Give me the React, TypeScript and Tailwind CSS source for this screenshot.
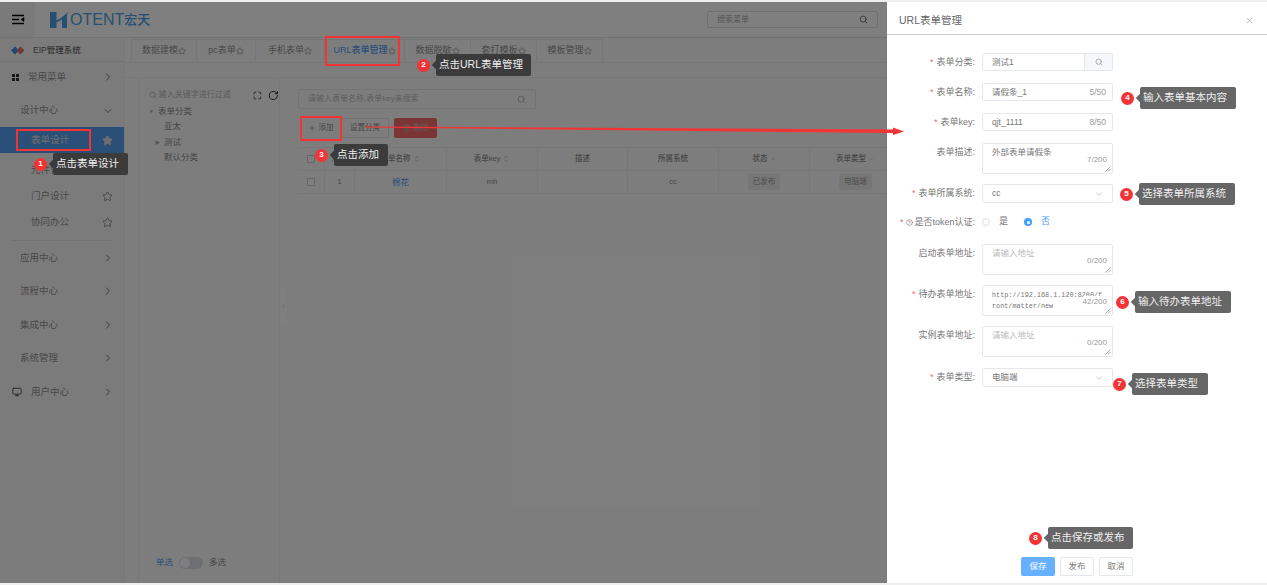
import { ChevronDown, ChevronRight, ChevronLeft, Search, Star, Plus, Trash2, Monitor, X, RotateCw, Maximize, ChevronsUpDown, CircleHelp } from 'lucide-react'

const tabs = [
  { name: '数据建模', w: 'w-[66px]' },
  { name: 'pc表单', w: 'w-[59px]' },
  { name: '手机表单', w: 'w-[69px]' },
  { name: 'URL表单管理', w: 'w-[80px]', active: true },
  { name: '数据脱敏', w: 'w-[66px]' },
  { name: '套打模板', w: 'w-[66px]' },
  { name: '模板管理', w: 'w-[66px]' },
]

const columns = [
  { name: '', w: 'w-[27px]' },
  { name: '序号', w: 'w-[30px]' },
  { name: '表单名称', w: 'w-[92px]', sort: true },
  { name: '表单key', w: 'w-[91px]', sort: true },
  { name: '描述', w: 'w-[90px]' },
  { name: '所属系统', w: 'w-[91px]' },
  { name: '状态', w: 'w-[91px]', filter: true },
  { name: '表单类型', w: 'w-[91px]', filter: true },
]

function MenuGroup({ name }: { name: string }) {
  return (
    <div className="flex h-[33.5px] items-center justify-between pl-[20px] pr-[10px] text-[9.5px] text-[#929292]">
      <span>{name}</span>
      <ChevronRight size={12} className="text-[#777]" />
    </div>
  )
}

function SubItem({ name, active, solid }: { name: string; active?: boolean; solid?: boolean }) {
  return (
    <div className={`flex h-[26px] items-center justify-between pl-[31px] pr-[11px] text-[9.5px] ${active ? 'bg-[#559ff0] text-[#ddd]' : 'text-[#929292]'}`}>
      <span>{name}</span>
      <Star size={11} className={solid ? 'fill-[#ddd] text-[#ddd]' : 'text-[#888]'} />
    </div>
  )
}

function Sidebar() {
  return (
    <aside className="flex w-[125px] shrink-0 flex-col border-r border-[#eee] bg-[#f7f7f7]">
      <div className="flex h-[24px] items-center gap-[8px] border-b border-[#e6e6e6] pl-[11px] pt-[2px] text-[8.5px] font-medium text-[#666]">
        <svg width="14" height="9" viewBox="0 0 14 9">
          <path d="M4 0.5 L8 4.5 L4 8.5 L0 4.5 Z" fill="#3f8fe8" />
          <path d="M9.5 0.5 L13.5 4.5 L9.5 8.5 L5.5 4.5 Z" fill="#e8706a" />
        </svg>
        <span>EIP管理系统</span>
      </div>
      <div className="flex h-[30px] items-center justify-between pl-[12px] pr-[10px] text-[9.5px] text-[#929292]">
        <span className="flex items-center gap-[9px]">
          <span className="grid grid-cols-2 gap-[1px]">
            <i className="size-[3px] bg-[#333]" />
            <i className="size-[3px] bg-[#333]" />
            <i className="size-[3px] bg-[#333]" />
            <i className="size-[3px] bg-[#333]" />
          </span>
          常用菜单
        </span>
        <ChevronRight size={12} className="text-[#777]" />
      </div>
      <div className="mt-[2px] flex h-[33px] items-center justify-between pl-[20px] pr-[10px] text-[9.5px] text-[#929292]">
        <span>设计中心</span>
        <ChevronDown size={12} className="text-[#777]" />
      </div>
      <SubItem name="表单设计" active solid />
      <div className="h-[4px]" />
      <SubItem name="元件管理" />
      <SubItem name="门户设计" />
      <SubItem name="协同办公" />
      <div className="mx-[12px] mt-[5px] border-t border-[#e4e4e4]" />
      <MenuGroup name="应用中心" />
      <MenuGroup name="流程中心" />
      <MenuGroup name="集成中心" />
      <MenuGroup name="系统管理" />
      <div className="flex h-[33.5px] items-center justify-between pl-[12px] pr-[10px] text-[9.5px] text-[#929292]">
        <span className="flex items-center gap-[9px]">
          <Monitor size={10} className="text-[#444]" />
          用户中心
        </span>
        <ChevronRight size={12} className="text-[#777]" />
      </div>
    </aside>
  )
}

function TreePanel() {
  return (
    <div className="relative flex w-[142px] shrink-0 flex-col border-x border-[#f0f0f0] pl-[10px] pt-[10px] text-[8.5px] text-[#8c8c8c]">
      <div className="flex h-[14px] items-center gap-[2px] text-[8px] text-[#b4b4b4]">
        <Search size={8} className="text-[#aaa]" />
        <span className="w-[84px] whitespace-nowrap">输入关键字进行过滤</span>
        <Maximize size={9} className="ml-[10px] text-[#222]" />
        <RotateCw size={11} className="ml-[4px] text-[#222]" />
      </div>
      <div className="mt-[2px] flex h-[15px] items-center gap-[4px]">
        <span className="text-[5px] text-[#aaa]">▼</span>表单分类
      </div>
      <div className="flex h-[15.5px] items-center pl-[15px]">亚太</div>
      <div className="flex h-[15.5px] items-center pl-[6px]">
        <span className="w-[9px] text-[5px] text-[#aaa]">▶</span>测试
      </div>
      <div className="flex h-[15.5px] items-center pl-[15px]">默认分类</div>
      <div className="absolute bottom-[14px] left-[17px] flex items-center gap-[6px] text-[8.5px]">
        <span className="text-[#559ff0]">单选</span>
        <span className="flex h-[12px] w-[24px] items-center rounded-full bg-[#dcdfe6] pl-[1px]">
          <i className="size-[10px] rounded-full bg-white" />
        </span>
        <span>多选</span>
      </div>
      <div className="absolute top-[209px] -right-[8px] flex h-[38px] w-[7px] items-center justify-center rounded-r-[3px] bg-white text-[#bbb]">
        <ChevronLeft size={8} />
      </div>
    </div>
  )
}

function DataTable() {
  return (
    <div className="mt-[9px] flex w-[603px] flex-col border-t border-[#eee] text-[7.5px] text-[#8c8c8c]">
      <div className="flex h-[23px] border-b border-[#eee] font-medium">
        {columns.map((c, i) => (
          <div key={i} className={`flex shrink-0 items-center justify-center gap-[2px] border-r border-[#eee] ${c.w}`}>
            {i === 0 && <i className="size-[8px] rounded-[1px] border border-[#ccc] bg-white" />}
            {c.name}
            {c.sort && <ChevronsUpDown size={8} className="text-[#aaa]" />}
            {c.filter && <ChevronDown size={6} className="text-[#aaa]" />}
          </div>
        ))}
      </div>
      <div className="flex h-[23px] border-b border-[#eee]">
        <div className="flex w-[27px] shrink-0 items-center justify-center border-r border-[#eee]">
          <i className="size-[8px] rounded-[1px] border border-[#ccc] bg-white" />
        </div>
        <div className="flex w-[30px] shrink-0 items-center justify-center border-r border-[#eee]">1</div>
        <div className="flex w-[92px] shrink-0 items-center justify-center border-r border-[#eee] text-[8.5px] text-[#559ff0]">棉花</div>
        <div className="flex w-[91px] shrink-0 items-center justify-center border-r border-[#eee]">mh</div>
        <div className="w-[90px] shrink-0 border-r border-[#eee]" />
        <div className="flex w-[91px] shrink-0 items-center justify-center border-r border-[#eee]">cc</div>
        <div className="flex w-[91px] shrink-0 items-center justify-center border-r border-[#eee]">
          <span className="rounded-[2px] bg-[#ececec] px-[5px] py-[2px] text-[#999]">已发布</span>
        </div>
        <div className="flex w-[91px] shrink-0 items-center justify-center">
          <span className="rounded-[2px] bg-[#ececec] px-[5px] py-[2px] text-[#999]">电脑端</span>
        </div>
      </div>
    </div>
  )
}

function MainContent() {
  return (
    <div className="flex min-w-0 flex-1 flex-col bg-[#fbfbfb]">
      <div className="flex h-[25px] items-stretch border-b border-[#eee] pl-[6px] pt-[1px]">
        {tabs.map((t) => (
          <div
            key={t.name}
            className={`flex shrink-0 items-center justify-center border-r border-t border-[#ececec] text-[9px] first:border-l ${t.w} ${t.active ? 'font-medium text-[#559ff0]' : 'text-[#929292]'}`}
          >
            {t.name}
            <Star size={8} className="text-[#888]" />
          </div>
        ))}
      </div>
      <div className="h-[15px] border-b border-[#eee]" />
      <div className="flex flex-1 pl-[13px]">
        <TreePanel />
        <div className="ml-[18px] flex flex-col pt-[11px]">
          <div className="flex h-[20px] w-[238px] items-center justify-between rounded-[2px] border border-[#e8e8e8] px-[9px] text-[8px] text-[#bbb]">
            请输入表单名称,表单key来搜索
            <Search size={9} className="text-[#aaa]" />
          </div>
          <div className="mt-[9px] flex h-[20px] items-stretch pl-[2px] text-[7.5px] text-[#8c8c8c]">
            <div className="flex w-[41px] items-center justify-center gap-[3px]">
              <Plus size={8} />添加
            </div>
            <div className="flex w-[48px] items-center justify-center rounded-[2px] border border-[#e4e4e4]">设置分类</div>
            <div className="ml-[5px] flex w-[43px] items-center justify-center gap-[3px] rounded-[2px] bg-[#f56c6c] text-[#bbb]">
              <Trash2 size={8} />删除
            </div>
          </div>
          <DataTable />
        </div>
      </div>
    </div>
  )
}

function Field({ label, required, children, mt }: { label: React.ReactNode; required?: boolean; children: React.ReactNode; mt: string }) {
  return (
    <div className={`flex items-start ${mt}`}>
      <label className="flex h-[18px] w-[88px] shrink-0 items-center justify-end pt-[1px] text-[9px] whitespace-nowrap text-[#777]">
        {required && <span className="mr-[3px] text-[#f56c6c]">*</span>}
        {label}:
      </label>
      <div className="ml-[7px] w-[131px]">{children}</div>
    </div>
  )
}

function TextInput({ value, count }: { value: string; count: string }) {
  return (
    <div className="flex h-[18px] items-center justify-between rounded-[2px] border border-[#e4e7ed] px-[9px] text-[8.5px] text-[#777]">
      <span>{value}</span>
      <span className="-mr-[3px] text-[#999]">{count}</span>
    </div>
  )
}

function SelectBox({ value }: { value: string }) {
  return (
    <div className="flex h-[19px] items-center justify-between rounded-[2px] border border-[#e4e7ed] px-[9px] text-[8.5px] text-[#777]">
      <span>{value}</span>
      <ChevronDown size={10} className="-mr-[1px] text-[#bbb]" />
    </div>
  )
}

function AreaBox({ value, count, placeholder, mono }: { value: string; count: string; placeholder?: boolean; mono?: boolean }) {
  return (
    <div className="relative h-[31px] overflow-hidden rounded-[2px] border border-[#e4e7ed] pl-[9px] pr-[9px] pt-[2px]">
      <div
        className={`break-all ${mono ? "pt-[2px] font-['Liberation_Mono',monospace] text-[6.8px] leading-[11px] text-[#777]" : placeholder ? 'text-[8.5px] text-[#bbb]' : 'text-[8.5px] text-[#777]'}`}
      >
        {value}
      </div>
      <span className="absolute right-[5px] bottom-[7px] bg-white text-[8px] text-[#999]">{count}</span>
      <svg className="absolute right-[1px] bottom-[1px]" width="6" height="6" viewBox="0 0 6 6">
        <path d="M0.5 5.5 L5.5 0.5 M3 5.5 L5.5 3" stroke="#888" strokeWidth="0.7" />
      </svg>
    </div>
  )
}

function Drawer() {
  return (
    <section className="flex w-[380px] shrink-0 flex-col bg-white">
      <div className="flex h-[33px] items-center justify-between border-b border-[#ccc] pl-[12px] pr-[13px] pt-[5px]">
        <span className="text-[10.5px] text-[#666]">URL表单管理</span>
        <X size={9} className="text-[#aaa]" />
      </div>
      <div className="flex flex-1 flex-col">
        <Field label="表单分类" required mt="mt-[18px]">
          <div className="flex h-[18px] rounded-[2px] border border-[#e4e7ed] text-[8.5px] text-[#777]">
            <span className="flex flex-1 items-center pl-[9px]">测试1</span>
            <span className="flex w-[28px] items-center justify-center border-l border-[#e4e7ed] bg-[#f5f7fa]">
              <Search size={8} className="text-[#888]" />
            </span>
          </div>
        </Field>
        <Field label="表单名称" required mt="mt-[12px]">
          <TextInput value="请假条_1" count="5/50" />
        </Field>
        <Field label="表单key" required mt="mt-[12px]">
          <TextInput value="qjt_1111" count="8/50" />
        </Field>
        <Field label="表单描述" mt="mt-[12px]">
          <AreaBox value="外部表单请假条" count="7/200" />
        </Field>
        <Field label="表单所属系统" required mt="mt-[10px]">
          <SelectBox value="cc" />
        </Field>
        <Field
          label={
            <span className="flex items-center gap-[1px]">
              <CircleHelp size={7} />
              是否token认证
            </span>
          }
          required
          mt="mt-[10px]"
        >
          <div className="flex h-[18px] items-center text-[9px]">
            <i className="size-[8px] rounded-full border border-[#dcdfe6]" />
            <span className="ml-[9px] text-[#777]">是</span>
            <span className="ml-[16px] flex size-[8px] items-center justify-center rounded-full bg-[#409eff]">
              <i className="size-[3px] rounded-full bg-white" />
            </span>
            <span className="ml-[9px] text-[#409eff]">否</span>
          </div>
        </Field>
        <Field label="启动表单地址" mt="mt-[13px]">
          <AreaBox value="请输入地址" count="0/200" placeholder />
        </Field>
        <Field label="待办表单地址" required mt="mt-[10px]">
          <AreaBox value="http://192.168.1.120:8280/front/matter/new" count="42/200" mono />
        </Field>
        <Field label="实例表单地址" mt="mt-[10px]">
          <AreaBox value="请输入地址" count="0/200" placeholder />
        </Field>
        <Field label="表单类型" required mt="mt-[11px]">
          <SelectBox value="电脑端" />
        </Field>
      </div>
      <div className="mb-[7px] flex items-center justify-end gap-[5px] pr-[134px] text-[8.5px]">
        <button className="h-[19px] w-[34px] rounded-[2px] bg-[#66b1ff] text-white">保存</button>
        <button className="h-[19px] w-[34px] rounded-[2px] border border-[#e4e7ed] text-[#777]">发布</button>
        <button className="h-[19px] w-[34px] rounded-[2px] border border-[#e4e7ed] text-[#777]">取消</button>
      </div>
    </section>
  )
}

// 教程标注：序号 + 气泡
function Note({ n, text, pos, w, light }: { n: number; text: string; pos: string; w: string; light?: boolean }) {
  return (
    <div className={`absolute z-30 flex items-center ${pos}`}>
      <span className="flex size-[13px] items-center justify-center rounded-full bg-[#f33434] text-[8px] font-bold text-white">{n}</span>
      <span className={`relative ml-[6px] flex h-[22px] items-center rounded-[2px] pl-[3px] text-[10.5px] whitespace-nowrap text-[#eee] ${w} ${light ? 'bg-[#666]' : 'bg-[#3b3b3b]'}`}>
        <i className={`absolute top-[8px] -left-[3px] size-[6px] rotate-45 ${light ? 'bg-[#666]' : 'bg-[#3b3b3b]'}`} />
        {text}
      </span>
    </div>
  )
}

export default function App() {
  return (
    <div className="relative h-[585px] w-[1267px] overflow-hidden bg-[#efefef] pt-[2px] pb-[2px] font-['Liberation_Sans','Noto_Sans_CJK_SC',sans-serif]">
      <div className="flex h-[581px]">
        <div className="relative flex w-[887px] shrink-0 flex-col overflow-hidden bg-white">
          <header className="flex h-[36px] shrink-0 items-center border-b border-[#e4e4e4] bg-[#fefefe]">
            <div className="flex h-full w-[35px] items-center justify-center bg-[#f4f4f4]">
              <svg width="14" height="11" viewBox="0 0 14 11" fill="none" stroke="#000" strokeWidth="1.5">
                <path d="M1 1.5H13M1 5.5H8M1 9.5H13" />
                <path d="M13 3.5L10 5.5L13 7.5Z" fill="#000" strokeWidth="0.5" />
              </svg>
            </div>
            <div className="ml-[15px] flex items-center">
              <svg width="19" height="18" viewBox="0 0 19 18">
                <path d="M0 1H6.5V9.5C9 8.5 14 5 18.5 0.5L17 3.5V17H12V8.5C10 9.8 8 10.8 6.5 11.3V17H0Z" fill="#4f9fe8" />
              </svg>
              <span className="ml-[1px] text-[16px] leading-none font-medium text-[#4f9fe8]">OTENT</span>
              <span className="text-[13px] leading-none font-medium text-[#4f9fe8]">宏天</span>
            </div>
            <div className="ml-auto mr-[9px] flex h-[17px] w-[171px] items-center justify-between rounded-[2px] border border-[#e0e0e0] px-[9px] text-[8px] text-[#aaa]">
              搜索菜单
              <Search size={9} className="text-[#555]" />
            </div>
          </header>
          <div className="flex min-h-0 flex-1">
            <Sidebar />
            <MainContent />
          </div>
          <div className="absolute inset-0 z-10 bg-black/50" />
        </div>
        <Drawer />
      </div>

      {/* 红框 */}
      <div className="absolute top-[129px] left-[16px] z-20 h-[22px] w-[75px] border-2 border-[#f33434]" />
      <div className="absolute top-[36px] left-[325px] z-20 h-[30px] w-[75px] border-2 border-[#f33434]" />
      <div className="absolute top-[116px] left-[300px] z-20 h-[25px] w-[42px] border-2 border-[#f33434]" />

      {/* 红色箭头 */}
      <svg className="absolute top-[120px] left-[360px] z-20" width="550" height="20" viewBox="0 0 550 20">
        <path d="M5 6.5 L533 9.5 L533 7.5 L544 11.5 L533 15 L533 13 L5 7.5 Z" fill="#f33434" />
      </svg>

      <Note n={1} text="点击表单设计" pos="top-[153px] left-[34px]" w="w-[75px]" />
      <Note n={2} text="点击URL表单管理" pos="top-[54px] left-[417px]" w="w-[95px]" />
      <Note n={3} text="点击添加" pos="top-[144px] left-[315px]" w="w-[54px]" />
      <Note n={4} text="输入表单基本内容" pos="top-[87px] left-[1121px]" w="w-[96px]" light />
      <Note n={5} text="选择表单所属系统" pos="top-[183px] left-[1120px]" w="w-[96px]" light />
      <Note n={6} text="输入待办表单地址" pos="top-[291px] left-[1116px]" w="w-[96px]" light />
      <Note n={7} text="选择表单类型" pos="top-[373px] left-[1113px]" w="w-[76px]" light />
      <Note n={8} text="点击保存或发布" pos="top-[527px] left-[1029px]" w="w-[85px]" light />
    </div>
  )
}
